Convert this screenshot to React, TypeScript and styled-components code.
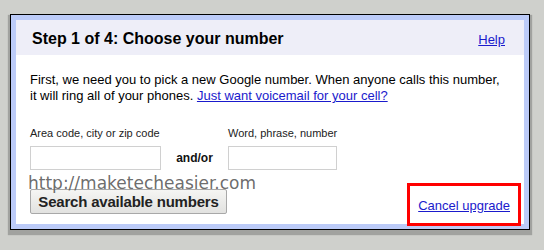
import React from "react";
import styled, { createGlobalStyle } from "styled-components";

const Global = createGlobalStyle`
  html, body { margin: 0; padding: 0; }
  body {
    background: #cfd0cc;
    font-family: "Liberation Sans", Arial, sans-serif;
    width: 544px;
    height: 250px;
    overflow: hidden;
  }
`;

const Frame = styled.div`
  position: relative;
  box-sizing: border-box;
  margin: 14px 0 0 10px;
  width: 520px;
  border: 1px solid #000;
  box-shadow: 0 3px 1px 2px rgba(0, 0, 0, 0.22);
`;

const Panel = styled.div`
  border: 5px solid #bccbf8;
  background: #fff;
`;

const Header = styled.div`
  display: flex;
  align-items: baseline;
  justify-content: space-between;
  background: #eeeef8;
  padding: 10px 19px 7px 16px;
  height: 18px;
`;

const Title = styled.h1`
  margin: 0;
  font-size: 16px;
  line-height: 18px;
  font-weight: bold;
  color: #000;
`;

const Link = styled.a`
  color: #1a1acc;
  text-decoration: underline;
  font-size: 13px;
  line-height: 16px;
  cursor: pointer;
`;

const Body = styled.div`
  padding: 17px 14px 10px 14px;
`;

const Intro = styled.p`
  margin: 0;
  font-size: 13px;
  line-height: 16px;
  color: #000;
  white-space: nowrap;
`;

const Fields = styled.div`
  display: flex;
  align-items: flex-end;
  margin-top: 23px;
`;

const Field = styled.label`
  display: flex;
  flex-direction: column;
  gap: 6px;
`;

const FieldLabel = styled.span`
  font-size: 11px;
  line-height: 13px;
  color: #222;
  white-space: nowrap;
`;

const TextInput = styled.input<{ $w: number }>`
  box-sizing: border-box;
  width: ${(p) => p.$w}px;
  height: 24px;
  border: 1px solid #d0d0d0;
  background: #fff;
  margin: 0;
  padding: 2px 4px;
  font-family: inherit;
  font-size: 13px;
  outline: none;
`;

const AndOr = styled.span`
  font-size: 12px;
  font-weight: bold;
  color: #111;
  line-height: 24px;
  width: 67px;
  text-align: center;
`;

const Actions = styled.div`
  display: flex;
  justify-content: space-between;
  align-items: flex-end;
  margin-top: 19px;
`;

const Button = styled.button`
  box-sizing: border-box;
  width: 197px;
  height: 25px;
  margin: 0;
  padding: 0;
  border: 1px solid #a8a8a8;
  border-radius: 2px;
  background: linear-gradient(#f5f5f3, #e2e2e0);
  font-family: "Liberation Sans", Arial, sans-serif;
  font-size: 15px;
  font-weight: bold;
  color: #222;
  letter-spacing: -0.2px;
`;

const Marked = styled.span`
  position: relative;
  display: inline-block;
  line-height: 16px;
`;

const RedBox = styled.span`
  position: absolute;
  left: -11px;
  right: -11px;
  top: -14px;
  bottom: -12px;
  border: 3px solid #ff0000;
  pointer-events: none;
`;

const Watermark = styled.div`
  position: absolute;
  left: 17px;
  top: 158px;
  font-family: "DejaVu Sans", Verdana, sans-serif;
  font-size: 17px;
  line-height: 20px;
  color: rgba(90, 90, 90, 0.9);
  white-space: nowrap;
  pointer-events: none;
`;

export default function App() {
  return (
    <>
      <Global />
      <Frame>
        <Panel>
          <Header>
            <Title>Step 1 of 4: Choose your number</Title>
            <Link>Help</Link>
          </Header>
          <Body>
            <Intro>
              First, we need you to pick a new Google number. When anyone calls this number,
              <br />
              it will ring all of your phones. <Link>Just want voicemail for your cell?</Link>
            </Intro>
            <Fields>
              <Field>
                <FieldLabel>Area code, city or zip code</FieldLabel>
                <TextInput $w={131} />
              </Field>
              <AndOr>and/or</AndOr>
              <Field>
                <FieldLabel>Word, phrase, number</FieldLabel>
                <TextInput $w={109} />
              </Field>
            </Fields>
            <Actions>
              <Button>Search available numbers</Button>
              <Marked>
                <Link>Cancel upgrade</Link>
                <RedBox />
              </Marked>
            </Actions>
          </Body>
        </Panel>
        <Watermark>http://maketecheasier.com</Watermark>
      </Frame>
    </>
  );
}
